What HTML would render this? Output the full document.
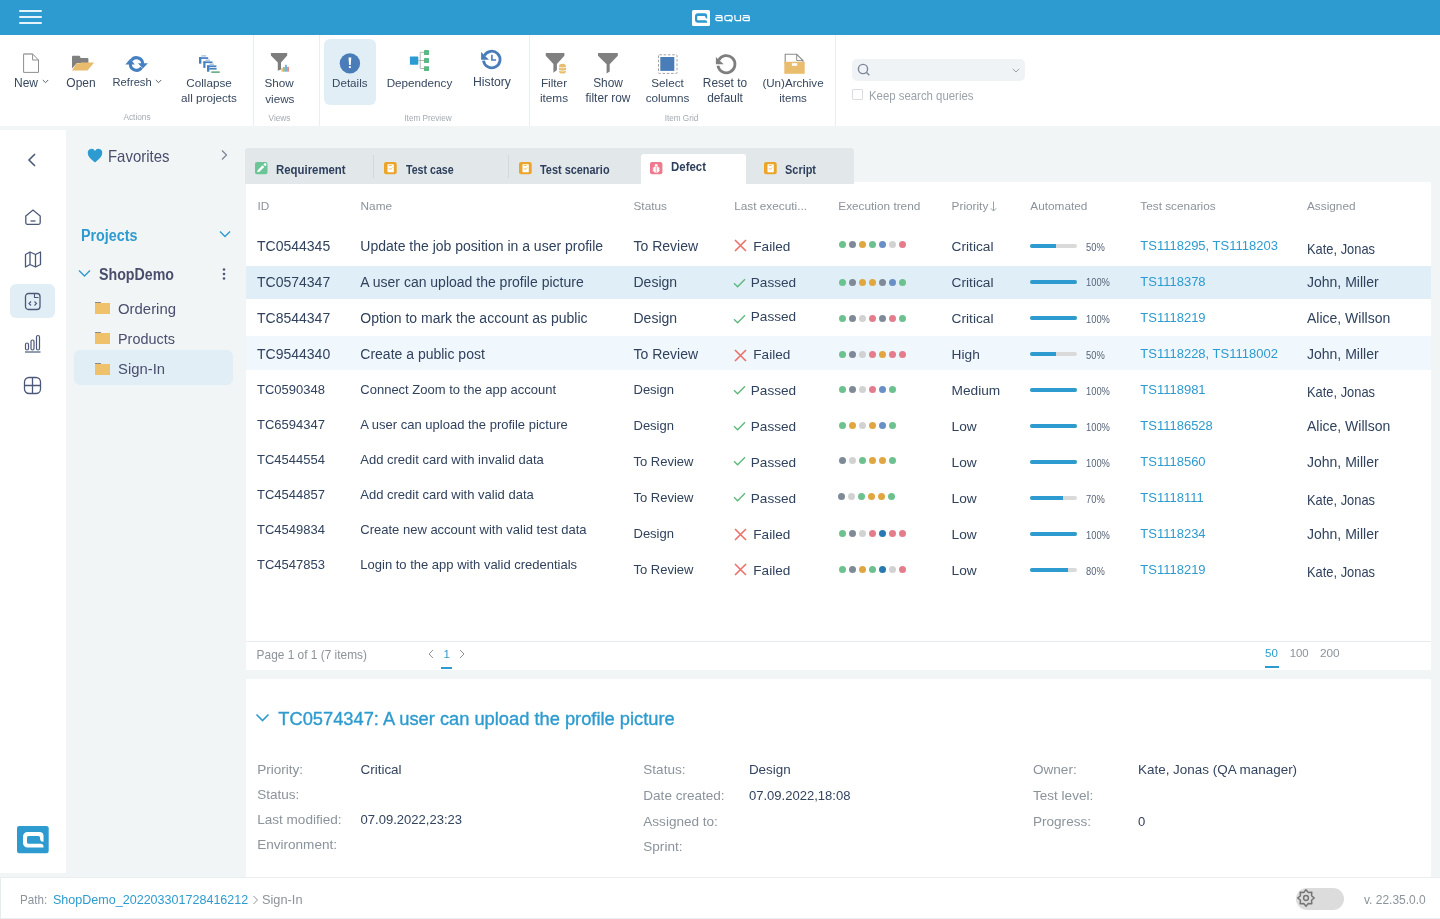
<!DOCTYPE html>
<html><head><meta charset="utf-8"><title>aqua</title>
<style>
html,body{margin:0;padding:0;}
body{width:1440px;height:919px;position:relative;overflow:hidden;font-family:"Liberation Sans", sans-serif;background:#f2f5f6;}
.t{position:absolute;white-space:nowrap;line-height:1;}
.r{position:absolute;display:block;}
#wrap{position:absolute;left:0;top:0;width:1440px;height:919px;will-change:transform;}
</style></head><body><div id="wrap">
<div class="r" style="left:0px;top:0px;width:1440px;height:919px;background:#f2f5f6;"></div>
<div class="r" style="left:0px;top:0px;width:1440px;height:35px;background:#2d9bd0;"></div>
<div class="r" style="left:0px;top:35px;width:1440px;height:91px;background:#ffffff;"></div>
<div class="r" style="left:253px;top:35px;width:1px;height:91px;background:#e9eef1;"></div>
<div class="r" style="left:319px;top:35px;width:1px;height:91px;background:#e9eef1;"></div>
<div class="r" style="left:529px;top:35px;width:1px;height:91px;background:#e9eef1;"></div>
<div class="r" style="left:835px;top:35px;width:1px;height:91px;background:#e9eef1;"></div>
<div class="r" style="left:0px;top:130px;width:66px;height:743px;background:#ffffff;"></div>
<div class="r" style="left:245px;top:148px;width:609px;height:36px;background:#e2e8ea;border-radius:3px 3px 0 0;"></div>
<div class="r" style="left:246px;top:184px;width:1185px;height:486px;background:#ffffff;"></div>
<div class="r" style="left:854px;top:182px;width:577px;height:2px;background:#ffffff;"></div>
<div class="r" style="left:246px;top:641px;width:1185px;height:1px;background:#e6ebee;"></div>
<div class="r" style="left:246px;top:679px;width:1185px;height:198px;background:#ffffff;"></div>
<div class="r" style="left:0px;top:877px;width:1440px;height:1px;background:#e9eef1;"></div>
<div class="r" style="left:0px;top:878px;width:1440px;height:40px;background:#ffffff;"></div>
<div class="r" style="left:0px;top:918px;width:1440px;height:1px;background:#e9eef1;"></div>
<div class="r" style="left:0px;top:878px;width:1px;height:40px;background:#e6ebee;"></div>
<div class="r" style="left:19px;top:10px;width:23px;height:2px;background:#e6f3fa;border-radius:1px;"></div>
<div class="r" style="left:19px;top:16px;width:23px;height:2px;background:#e6f3fa;border-radius:1px;"></div>
<div class="r" style="left:19px;top:22px;width:23px;height:2px;background:#e6f3fa;border-radius:1px;"></div>
<svg class="r" style="left:692px;top:10px" width="18" height="16" viewBox="0 0 18 16"><rect x="0" y="0" width="18" height="16" rx="1.5" fill="#fff"/><path d="M6 3.3H12.7A2.5 2.5 0 0 1 15.2 5.8V8.4A1.9 1.9 0 0 1 13.3 6.9A0.8 0.8 0 0 0 12.5 6.1H6A0.8 0.8 0 0 0 5.2 6.9V9.5A0.8 0.8 0 0 0 6 10.3H13.3A1.9 1.9 0 0 1 15.2 12.2V12.8H6A3 3 0 0 1 3 9.8V6.3A3 3 0 0 1 6 3.3Z" fill="#2d9bd0"/></svg>
<svg class="r" style="left:715px;top:0px" width="36" height="35" viewBox="0 0 36 35"><g fill="none" stroke="#fff" stroke-width="1.25"><path d="M0.6 15.7H5.6a1.4 1.4 0 0 1 1.4 1.4V20.5H2.1a1.4 1.4 0 0 1-1.4-1.4v-0.1a1.4 1.4 0 0 1 1.4-1.4H7"/><path d="M11.399999999999999 15.7H15.6a1.5 1.5 0 0 1 1.5 1.5V19a1.5 1.5 0 0 1-1.5 1.5H11.399999999999999a1.5 1.5 0 0 1-1.5-1.5V17.2a1.5 1.5 0 0 1 1.5-1.5z"/><path d="M14.399999999999999 19.2L16.7 21.6"/><path d="M19.9 15V19a1.5 1.5 0 0 0 1.5 1.5H25.5V15"/><path d="M27.8 15.7H32.8a1.4 1.4 0 0 1 1.4 1.4V20.5H29.3a1.4 1.4 0 0 1-1.4-1.4v-0.1a1.4 1.4 0 0 1 1.4-1.4H34.2"/></g></svg>
<svg class="r" style="left:22px;top:52px" width="18" height="22" viewBox="0 0 18 22"><path d="M1.6 1.9H10.6L16.5 8V20.4H1.6Z" fill="#fff" stroke="#8e8e8e" stroke-width="1"/><path d="M10.6 1.9V8H16.5" fill="none" stroke="#8e8e8e" stroke-width="1"/><path d="M1.6 2.2H10.3" stroke="#b5b5b5" stroke-width="1.2"/></svg>
<div class="t" style="left:14px;top:77px;font-size:12px;color:#37485f;">New</div>
<svg class="r" style="left:41.5px;top:79px" width="7" height="5" viewBox="0 0 7 5"><path d="M0.8 1l2.7 2.7L6.2 1" fill="none" stroke="#5a6478" stroke-width="1"/></svg>
<svg class="r" style="left:71px;top:55px" width="24" height="17" viewBox="0 0 24 17"><path d="M1 1.8a1 1 0 0 1 1-1h6.2a1 1 0 0 1 0.8 0.5L9.6 3H16.4a1 1 0 0 1 1 1V8H6L1 13.5Z" fill="#808080"/><path d="M1 15.6L5.6 8.2H9.2L10.2 7.6H23.2L16.5 15.6Z" fill="#e8bc6c"/></svg>
<div class="t" style="left:-219px;width:600px;text-align:center;top:77px;font-size:12px;color:#37485f;">Open</div>
<svg class="r" style="left:125px;top:55px" width="23" height="18" viewBox="0 0 23 18"><path d="M5.3 9A6.2 6.2 0 0 0 16.6 12.6" fill="none" stroke="#4580c0" stroke-width="3"/><path d="M6.4 5.4A6.2 6.2 0 0 1 17.7 9" fill="none" stroke="#4580c0" stroke-width="3"/><path d="M0.3 9.4L5.3 3.7 9.8 9.4z" fill="#4580c0"/><path d="M12.9 8.3L22.9 8.3 17.9 13.6z" fill="#4580c0"/></svg>
<div class="t" style="left:112.5px;top:77px;font-size:11.2px;color:#37485f;">Refresh</div>
<svg class="r" style="left:155px;top:78.5px" width="7" height="5" viewBox="0 0 7 5"><path d="M0.8 1l2.7 2.7L6.2 1" fill="none" stroke="#5a6478" stroke-width="1"/></svg>
<svg class="r" style="left:197px;top:54px" width="24" height="20" viewBox="0 0 24 20"><g fill="#4580c0"><rect x="2" y="3.2" width="9.2" height="1.7"/><rect x="2" y="3.2" width="2.4" height="6.5"/><rect x="6.3" y="7.4" width="9.2" height="1.7"/><rect x="6.3" y="7.4" width="2.2" height="6.5"/><rect x="10" y="11.4" width="9.4" height="1.8"/><rect x="10" y="11.4" width="2.4" height="6.3"/><rect x="12.4" y="14" width="7.2" height="1.6"/></g><g fill="#9bb8dc"><rect x="4.4" y="1.3" width="4.6" height="1.2"/><rect x="8.5" y="5.6" width="4.6" height="1.2"/><rect x="12.4" y="9.6" width="4.6" height="1.2"/></g><rect x="14.3" y="17.3" width="8.4" height="1.7" fill="#6ab08a"/></svg>
<div class="t" style="left:-91px;width:600px;text-align:center;top:77px;font-size:11.7px;color:#37485f;">Collapse</div>
<div class="t" style="left:-91px;width:600px;text-align:center;top:92px;font-size:11.7px;color:#37485f;">all projects</div>
<div class="t" style="left:-163px;width:600px;text-align:center;top:113px;font-size:8.3px;color:#a3abb3;">Actions</div>
<svg class="r" style="left:270px;top:52px" width="20" height="21" viewBox="0 0 20 21"><path d="M0.9 1H17.2V3.4L11 10.4V17.4L7.8 18.7V10.4L0.9 3.4Z" fill="#7d7d7d"/><rect x="11.3" y="15.9" width="1.7" height="3.8" fill="#f0c27e"/><rect x="13" y="14.9" width="2" height="4.8" fill="#8fc4a0"/><rect x="15" y="12.8" width="2" height="6.9" fill="#7fb0e0"/><rect x="17" y="14.9" width="2" height="4.8" fill="#f08c7c"/></svg>
<div class="t" style="left:-21px;width:600px;text-align:center;top:77px;font-size:11.7px;color:#37485f;">Show</div>
<div class="t" style="left:-20.19999999999999px;width:600px;text-align:center;top:93px;font-size:11.7px;color:#37485f;">views</div>
<div class="t" style="left:-20.5px;width:600px;text-align:center;top:114px;font-size:8.3px;color:#a3abb3;">Views</div>
<div class="r" style="left:324px;top:39px;width:52px;height:66px;background:#e1eef6;border-radius:6px;"></div>
<svg class="r" style="left:339px;top:52px" width="22" height="22" viewBox="0 0 22 22"><circle cx="10.9" cy="11.4" r="10.2" fill="#4a7db8"/><path d="M9.5 5.5H12.3L11.7 13.1H10.1Z" fill="#fff"/><rect x="9.9" y="14.2" width="2" height="1.8" fill="#fff"/></svg>
<div class="t" style="left:49.80000000000001px;width:600px;text-align:center;top:77px;font-size:11.6px;color:#37485f;">Details</div>
<svg class="r" style="left:409px;top:49px" width="22" height="23" viewBox="0 0 22 23"><path d="M9.3 11.5H15M11.2 3.3V19.5M11.2 3.3H15M11.2 19.5H15" stroke="#b4b4b4" stroke-width="1" fill="none"/><rect x="0.9" y="7.6" width="8.4" height="8.2" rx="0.8" fill="#2a9bd3"/><rect x="15" y="1.1" width="5" height="5" rx="0.4" fill="#5cb884"/><rect x="15" y="9.1" width="5" height="4.8" rx="0.4" fill="#5cb884"/><rect x="15" y="17.2" width="5" height="4.9" rx="0.4" fill="#5cb884"/></svg>
<div class="t" style="left:119.5px;width:600px;text-align:center;top:77px;font-size:11.7px;color:#37485f;">Dependency</div>
<svg class="r" style="left:480px;top:48px" width="23" height="23" viewBox="0 0 23 23"><path d="M3.5 12.6A8.3 8.3 0 1 0 4.4 7.6" fill="none" stroke="#4a7db8" stroke-width="2.8"/><path d="M1.1 3.9L5.4 8.2 9 11.8H1.1Z" fill="#4a7db8"/><path d="M11.9 6.8V12H16.1" fill="none" stroke="#4a7db8" stroke-width="1.6"/></svg>
<div class="t" style="left:192px;width:600px;text-align:center;top:76px;font-size:12.2px;color:#37485f;">History</div>
<div class="t" style="left:128px;width:600px;text-align:center;top:115px;font-size:8.2px;color:#a3abb3;">Item Preview</div>
<svg class="r" style="left:545px;top:52px" width="23" height="23" viewBox="0 0 23 23"><path d="M0.75 1.2Q0.75 1 1 1H19.2Q19.4 1 19.4 1.2V3.8L11.9 11.9V17.9L8.4 20.7V11.9L0.75 3.8Z" fill="#808080"/><rect x="14" y="11.8" width="7" height="9.8" rx="3.2" fill="#e8be6e"/><path d="M14 15.3Q17.5 16.6 21 15.3M14 18.4Q17.5 19.7 21 18.4" stroke="#fff" stroke-width="0.8" fill="none"/></svg>
<div class="t" style="left:254px;width:600px;text-align:center;top:78px;font-size:11.8px;color:#37485f;">Filter</div>
<div class="t" style="left:254px;width:600px;text-align:center;top:93px;font-size:11.8px;color:#37485f;">items</div>
<svg class="r" style="left:597px;top:52px" width="22" height="22" viewBox="0 0 22 22"><path d="M1 1.2Q1 1 1.2 1H20.6Q20.8 1 20.8 1.2V3.8L12.7 12.25V19.4L9.6 21.6V12.25L1 3.8Z" fill="#808080"/></svg>
<div class="t" style="left:308px;width:600px;text-align:center;top:78px;font-size:11.9px;color:#37485f;">Show</div>
<div class="t" style="left:308px;width:600px;text-align:center;top:93px;font-size:11.9px;color:#37485f;">filter row</div>
<svg class="r" style="left:657px;top:53px" width="21" height="21" viewBox="0 0 21 21"><rect x="1.5" y="1.8" width="18.5" height="18.6" rx="0.8" fill="none" stroke="#a3a3a3" stroke-width="1" stroke-dasharray="2.6 1.7"/><rect x="3.3" y="4" width="14" height="13.9" fill="#4a7db8"/></svg>
<div class="t" style="left:367.5px;width:600px;text-align:center;top:77px;font-size:11.7px;color:#37485f;">Select</div>
<div class="t" style="left:367.5px;width:600px;text-align:center;top:92px;font-size:11.7px;color:#37485f;">columns</div>
<svg class="r" style="left:714px;top:52.8px" width="24" height="23" viewBox="0 0 24 23"><path d="M3.9 12.8A8.6 8.6 0 1 0 4.7 7.3" fill="none" stroke="#7f7f7f" stroke-width="2.8"/><path d="M1.9 4L6 8.1 9.9 11.3H1.9Z" fill="#7f7f7f"/></svg>
<div class="t" style="left:425px;width:600px;text-align:center;top:78px;font-size:11.9px;color:#37485f;">Reset to</div>
<div class="t" style="left:425px;width:600px;text-align:center;top:93px;font-size:11.9px;color:#37485f;">default</div>
<svg class="r" style="left:783px;top:53px" width="23" height="22" viewBox="0 0 23 22"><path d="M2.2 1.3H13.7L20 7.6V10H2.2Z" fill="#fff" stroke="#8c8c8c" stroke-width="1.1"/><path d="M13.7 1.3V7.6H20" fill="none" stroke="#8c8c8c" stroke-width="1"/><rect x="1.3" y="8.75" width="20.4" height="12.05" fill="#e8be6e"/><rect x="8.9" y="10.2" width="5.3" height="2.6" fill="#fff"/></svg>
<div class="t" style="left:493px;width:600px;text-align:center;top:77px;font-size:11.6px;color:#37485f;">(Un)Archive</div>
<div class="t" style="left:493px;width:600px;text-align:center;top:92px;font-size:11.6px;color:#37485f;">items</div>
<div class="t" style="left:381.5px;width:600px;text-align:center;top:115px;font-size:8.2px;color:#a3abb3;">Item Grid</div>
<div class="r" style="left:852px;top:59px;width:173px;height:22px;background:#eff3f6;border-radius:5px;"></div>
<svg class="r" style="left:857px;top:63px" width="14" height="14" viewBox="0 0 14 14"><circle cx="6" cy="6" r="4.6" fill="none" stroke="#7d8799" stroke-width="1.4"/><path d="M9.3 9.3l3 3" stroke="#7d8799" stroke-width="1.4"/></svg>
<svg class="r" style="left:1012px;top:68px" width="8" height="5" viewBox="0 0 8 5"><path d="M0.8 0.8l3.2 3.2 3.2-3.2" fill="none" stroke="#9aa2ad" stroke-width="1"/></svg>
<div class="r" style="left:852px;top:89px;width:11px;height:11px;background:#ffffff;border:1px solid #d9dde1;box-sizing:border-box;border-radius:1px;"></div>
<div class="t" style="left:868.5px;top:89px;font-size:13px;color:#9aa3ab;transform:scaleX(0.876);transform-origin:left top;">Keep search queries</div>
<svg class="r" style="left:24px;top:150px" width="16" height="20" viewBox="0 0 16 20"><path d="M11 4L5 10l6 6" fill="none" stroke="#4b5878" stroke-width="1.6"/></svg>
<svg class="r" style="left:24px;top:208px" width="18" height="18" viewBox="0 0 18 18"><path d="M1.8 8L9 2l7.2 6v6.8a1.5 1.5 0 0 1-1.5 1.5H3.3a1.5 1.5 0 0 1-1.5-1.5z" fill="none" stroke="#4b5878" stroke-width="1.3"/><path d="M6.5 13h5" stroke="#4b5878" stroke-width="1.3"/></svg>
<svg class="r" style="left:24px;top:250px" width="18" height="19" viewBox="0 0 18 19"><path d="M1.5 4.5l4.5-2.5 5.5 2.5 5-2.5v12.5l-5 2.5-5.5-2.5-4.5 2.5z" fill="none" stroke="#4b5878" stroke-width="1.3" stroke-linejoin="round"/><path d="M6 2v12.5M11.5 4.5v12.5" stroke="#4b5878" stroke-width="1.3"/></svg>
<div class="r" style="left:10px;top:284px;width:45px;height:34px;background:#e1eef6;border-radius:6px;"></div>
<svg class="r" style="left:24px;top:292px" width="18" height="19" viewBox="0 0 18 19"><rect x="1.5" y="1.5" width="14.5" height="16" rx="3" fill="none" stroke="#4b5878" stroke-width="1.3"/><path d="M10.5 2v3.5h4" fill="none" stroke="#4b5878" stroke-width="1.1"/><path d="M7 9.5l-2 2 2 2M10.5 9.5l2 2-2 2" fill="none" stroke="#4b5878" stroke-width="1.1"/></svg>
<svg class="r" style="left:24px;top:334px" width="18" height="19" viewBox="0 0 18 19"><rect x="1.5" y="9" width="3" height="7" rx="1.5" fill="none" stroke="#4b5878" stroke-width="1.2"/><rect x="7" y="6" width="3" height="10" rx="1.5" fill="none" stroke="#4b5878" stroke-width="1.2"/><rect x="12.5" y="1.5" width="3" height="14.5" rx="1.5" fill="none" stroke="#4b5878" stroke-width="1.2"/><path d="M1 18h15.5" stroke="#4b5878" stroke-width="1.2"/></svg>
<svg class="r" style="left:23px;top:376px" width="19" height="19" viewBox="0 0 19 19"><rect x="1.5" y="1.5" width="16" height="16" rx="4.5" fill="none" stroke="#4b5878" stroke-width="1.3"/><path d="M9.5 1.5v16M1.5 9.5h16" stroke="#4b5878" stroke-width="1.3"/></svg>
<svg class="r" style="left:17px;top:826px" width="32" height="28" viewBox="0 0 32 28"><rect x="0" y="0" width="31.7" height="27.2" rx="2.2" fill="#2d9bd0"/><path d="M10.5 6H22.5A4 4 0 0 1 26.5 10V15.8A3.5 3.5 0 0 1 23 12.3V11.6A1.5 1.5 0 0 0 21.5 10.1H11.5A1.5 1.5 0 0 0 10 11.6V16.2A1.5 1.5 0 0 0 11.5 17.7H23.5A3 3 0 0 1 26.5 20.7V21.6H10.5A4.5 4.5 0 0 1 6 17.1V10.5A4.5 4.5 0 0 1 10.5 6Z" fill="#fff"/></svg>
<svg class="r" style="left:87px;top:147.6px" width="16" height="15" viewBox="0 0 16 15"><path d="M8 14.5C3 10.5 0.8 8 0.8 5A3.8 3.8 0 0 1 8 3a3.8 3.8 0 0 1 7.2 2c0 3-2.2 5.5-7.2 9.5z" fill="#2d9bd0"/></svg>
<div class="t" style="left:108.4px;top:148px;font-size:16.5px;color:#484e6c;transform:scaleX(0.905);transform-origin:left top;">Favorites</div>
<svg class="r" style="left:220px;top:149px" width="9" height="12" viewBox="0 0 9 12"><path d="M2 1.5l4.5 4.5L2 10.5" fill="none" stroke="#7b8494" stroke-width="1.2"/></svg>
<div class="t" style="left:80.6px;top:228px;font-size:16px;color:#2d9bcf;transform:scaleX(0.895);transform-origin:left top;font-weight:700;">Projects</div>
<svg class="r" style="left:219px;top:230px" width="12" height="8" viewBox="0 0 12 8"><path d="M1 1.5l5 5 5-5" fill="none" stroke="#2d9bd0" stroke-width="1.4"/></svg>
<svg class="r" style="left:78px;top:269px" width="13" height="9" viewBox="0 0 13 9"><path d="M1 1.5l5.5 5.5 5.5-5.5" fill="none" stroke="#2d9bd0" stroke-width="1.4"/></svg>
<div class="t" style="left:98.7px;top:267px;font-size:15.8px;color:#484e6c;transform:scaleX(0.9);transform-origin:left top;font-weight:700;">ShopDemo</div>
<svg class="r" style="left:222px;top:268px" width="4" height="12" viewBox="0 0 4 12"><circle cx="2" cy="1.5" r="1.3" fill="#4b5878"/><circle cx="2" cy="6" r="1.3" fill="#4b5878"/><circle cx="2" cy="10.5" r="1.3" fill="#4b5878"/></svg>
<div class="r" style="left:74px;top:350px;width:159px;height:35px;background:#e1eef6;border-radius:6px;"></div>
<svg class="r" style="left:95px;top:302px" width="15" height="12" viewBox="0 0 15 12"><rect x="0" y="0" width="6" height="2" fill="#8a8a8a"/><rect x="0" y="1" width="15" height="11" fill="#efc16a"/></svg>
<div class="t" style="left:117.7px;top:301px;font-size:15.5px;color:#484e6c;transform:scaleX(0.962);transform-origin:left top;">Ordering</div>
<svg class="r" style="left:95px;top:332.4px" width="15" height="12" viewBox="0 0 15 12"><rect x="0" y="0" width="6" height="2" fill="#8a8a8a"/><rect x="0" y="1" width="15" height="11" fill="#efc16a"/></svg>
<div class="t" style="left:117.7px;top:331px;font-size:15.5px;color:#484e6c;transform:scaleX(0.93);transform-origin:left top;">Products</div>
<svg class="r" style="left:95px;top:362.5px" width="15" height="12" viewBox="0 0 15 12"><rect x="0" y="0" width="6" height="2" fill="#8a8a8a"/><rect x="0" y="1" width="15" height="11" fill="#efc16a"/></svg>
<div class="t" style="left:117.7px;top:361px;font-size:15.5px;color:#484e6c;transform:scaleX(0.957);transform-origin:left top;">Sign-In</div>
<div class="r" style="left:641px;top:154px;width:105px;height:30px;background:#ffffff;border-radius:3px 3px 0 0;"></div>
<div class="r" style="left:373px;top:155px;width:1px;height:23px;background:#d3dadf;"></div>
<div class="r" style="left:508px;top:155px;width:1px;height:23px;background:#d3dadf;"></div>
<svg class="r" style="left:254.5px;top:161.8px" width="13" height="13" viewBox="0 0 13 13"><rect x="0" y="0" width="12.5" height="12.3" rx="2" fill="#6cc497"/><path d="M2.2 10.3L2.8 8 7.6 3.2 9.3 4.9 4.5 9.7z" fill="#fff"/><path d="M8.4 2.4l0.9-0.9a1.1 1.1 0 0 1 1.6 0l0.2 0.2a1.1 1.1 0 0 1 0 1.6l-0.9 0.9z" fill="#fff"/></svg>
<div class="t" style="left:276.4px;top:164px;font-size:12.5px;color:#2e3f5c;transform:scaleX(0.911);transform-origin:left top;font-weight:700;">Requirement</div>
<svg class="r" style="left:384.3px;top:161.8px" width="13" height="13" viewBox="0 0 13 13"><rect x="0" y="0" width="12.7" height="12.3" rx="2" fill="#eba52a"/><rect x="3.5" y="2.2" width="6.3" height="8" rx="0.5" fill="#fff"/><rect x="4.8" y="3.1" width="3" height="0.7" fill="#eba52a"/><path d="M5 6.3l1.2 1.2 2-2" fill="none" stroke="#eba52a" stroke-width="0.8"/></svg>
<div class="t" style="left:406.3px;top:164px;font-size:12.5px;color:#2e3f5c;transform:scaleX(0.851);transform-origin:left top;font-weight:700;">Test case</div>
<svg class="r" style="left:518.7px;top:161.8px" width="13" height="13" viewBox="0 0 13 13"><rect x="0" y="0" width="12.7" height="12.3" rx="2" fill="#eba52a"/><rect x="3.5" y="2.2" width="6.3" height="8" rx="0.5" fill="#fff"/><rect x="4.8" y="3.1" width="3" height="0.7" fill="#eba52a"/><path d="M5 6.3l1.2 1.2 2-2" fill="none" stroke="#eba52a" stroke-width="0.8"/></svg>
<div class="t" style="left:540px;top:164px;font-size:12.5px;color:#2e3f5c;transform:scaleX(0.873);transform-origin:left top;font-weight:700;">Test scenario</div>
<svg class="r" style="left:650.4px;top:161.8px" width="13" height="13" viewBox="0 0 13 13"><rect x="0" y="0" width="12.4" height="12.2" rx="2" fill="#ee7a8e"/><rect x="4.8" y="2.2" width="2.9" height="2" rx="0.6" fill="#fff"/><ellipse cx="6.25" cy="7.6" rx="3" ry="3.3" fill="#fff"/><path d="M6.25 4.6v6.2" stroke="#ee7a8e" stroke-width="0.7"/><path d="M2.6 6.2h1.2M8.7 6.2h1.2M2.6 8.6h1.2M8.7 8.6h1.2" stroke="#fff" stroke-width="0.7"/></svg>
<div class="t" style="left:670.5px;top:161px;font-size:12.5px;color:#2e3f5c;transform:scaleX(0.916);transform-origin:left top;font-weight:700;">Defect</div>
<svg class="r" style="left:763.7px;top:161.8px" width="13" height="13" viewBox="0 0 13 13"><rect x="0" y="0" width="12.7" height="12.3" rx="2" fill="#eba52a"/><rect x="3.5" y="2.2" width="6.3" height="8" rx="0.5" fill="#fff"/><rect x="4.8" y="3.1" width="3" height="0.7" fill="#eba52a"/><path d="M5 6.3l1.2 1.2 2-2" fill="none" stroke="#eba52a" stroke-width="0.8"/></svg>
<div class="t" style="left:785px;top:164px;font-size:12.5px;color:#2e3f5c;transform:scaleX(0.875);transform-origin:left top;font-weight:700;">Script</div>
<div class="t" style="left:257.5px;top:201px;font-size:11.8px;color:#8b939b;">ID</div>
<div class="t" style="left:360.6px;top:201px;font-size:11.8px;color:#8b939b;">Name</div>
<div class="t" style="left:633.5px;top:201px;font-size:11.8px;color:#8b939b;">Status</div>
<div class="t" style="left:734.2px;top:201px;font-size:11.8px;color:#8b939b;">Last executi...</div>
<div class="t" style="left:838.3px;top:201px;font-size:11.8px;color:#8b939b;">Execution trend</div>
<div class="t" style="left:951.6px;top:201px;font-size:11.8px;color:#8b939b;">Priority</div>
<div class="t" style="left:1030.3px;top:201px;font-size:11.8px;color:#8b939b;">Automated</div>
<div class="t" style="left:1140.3px;top:201px;font-size:11.8px;color:#8b939b;">Test scenarios</div>
<div class="t" style="left:1307px;top:201px;font-size:11.8px;color:#8b939b;">Assigned</div>
<svg class="r" style="left:990px;top:201px" width="7" height="11" viewBox="0 0 7 11"><path d="M3.5 0.5v9.5M0.8 7.3l2.7 2.7 2.7-2.7" fill="none" stroke="#9aa2aa" stroke-width="1"/></svg>
<div class="r" style="left:246px;top:266px;width:1185px;height:33px;background:#e0eef7;"></div>
<div class="r" style="left:246px;top:336px;width:1185px;height:34px;background:#f0f7fd;"></div>
<div class="t" style="left:257px;top:239px;font-size:14px;color:#30425d;">TC0544345</div>
<div class="t" style="left:360.3px;top:239px;font-size:14px;color:#30425d;">Update the job position in a user profile</div>
<div class="t" style="left:633.5px;top:239px;font-size:14px;color:#30425d;">To Review</div>
<svg class="r" style="left:733.8px;top:238.6px" width="13" height="13" viewBox="0 0 13 13"><path d="M1 1l11 11M12 1L1 12" fill="none" stroke="#ec6f6a" stroke-width="1.6"/></svg>
<div class="t" style="left:753.3px;top:240px;font-size:13.6px;color:#30425d;">Failed</div>
<svg class="r" style="left:839px;top:241.1px" width="7" height="7" viewBox="0 0 7 7"><circle cx="3.5" cy="3.5" r="3.5" fill="#6cc18f"/></svg>
<svg class="r" style="left:849px;top:241.1px" width="7" height="7" viewBox="0 0 7 7"><circle cx="3.5" cy="3.5" r="3.5" fill="#7f8a98"/></svg>
<svg class="r" style="left:859px;top:241.1px" width="7" height="7" viewBox="0 0 7 7"><circle cx="3.5" cy="3.5" r="3.5" fill="#e0a640"/></svg>
<svg class="r" style="left:869px;top:241.1px" width="7" height="7" viewBox="0 0 7 7"><circle cx="3.5" cy="3.5" r="3.5" fill="#6cc18f"/></svg>
<svg class="r" style="left:879px;top:241.1px" width="7" height="7" viewBox="0 0 7 7"><circle cx="3.5" cy="3.5" r="3.5" fill="#6a8fc4"/></svg>
<svg class="r" style="left:889px;top:241.1px" width="7" height="7" viewBox="0 0 7 7"><circle cx="3.5" cy="3.5" r="3.5" fill="#d2d2d2"/></svg>
<svg class="r" style="left:899px;top:241.1px" width="7" height="7" viewBox="0 0 7 7"><circle cx="3.5" cy="3.5" r="3.5" fill="#e57c8c"/></svg>
<div class="t" style="left:951.6px;top:240px;font-size:13.7px;color:#30425d;">Critical</div>
<div class="r" style="left:1030px;top:244.0px;width:47px;height:4px;background:#dadada;border-radius:2px;"></div>
<div class="r" style="left:1030px;top:244.0px;width:26px;height:4px;background:#2d9bcf;border-radius:2px 0 0 2px;"></div>
<div class="t" style="left:1086.3px;top:242px;font-size:11px;color:#56657a;transform:scaleX(0.85);transform-origin:left bottom;">50%</div>
<div class="t" style="left:1140.3px;top:239px;font-size:13px;color:#2d9bcf;">TS1118295, TS1118203</div>
<div class="t" style="left:1307px;top:242px;font-size:14.5px;color:#30425d;transform:scaleX(0.888);transform-origin:left top;">Kate, Jonas</div>
<div class="t" style="left:257px;top:275px;font-size:14px;color:#30425d;">TC0574347</div>
<div class="t" style="left:360.3px;top:275px;font-size:14px;color:#30425d;">A user can upload the profile picture</div>
<div class="t" style="left:633.5px;top:275px;font-size:14px;color:#30425d;">Design</div>
<svg class="r" style="left:732.5px;top:277.6px" width="13" height="10" viewBox="0 0 13 10"><path d="M1 5.2l3.6 3.6L12 1.2" fill="none" stroke="#5cb87a" stroke-width="1.3"/></svg>
<div class="t" style="left:750.8px;top:276px;font-size:13.6px;color:#30425d;">Passed</div>
<svg class="r" style="left:839px;top:278.6px" width="7" height="7" viewBox="0 0 7 7"><circle cx="3.5" cy="3.5" r="3.5" fill="#6cc18f"/></svg>
<svg class="r" style="left:849px;top:278.6px" width="7" height="7" viewBox="0 0 7 7"><circle cx="3.5" cy="3.5" r="3.5" fill="#7f8a98"/></svg>
<svg class="r" style="left:859px;top:278.6px" width="7" height="7" viewBox="0 0 7 7"><circle cx="3.5" cy="3.5" r="3.5" fill="#e0a640"/></svg>
<svg class="r" style="left:869px;top:278.6px" width="7" height="7" viewBox="0 0 7 7"><circle cx="3.5" cy="3.5" r="3.5" fill="#e0a640"/></svg>
<svg class="r" style="left:879px;top:278.6px" width="7" height="7" viewBox="0 0 7 7"><circle cx="3.5" cy="3.5" r="3.5" fill="#7f8a98"/></svg>
<svg class="r" style="left:889px;top:278.6px" width="7" height="7" viewBox="0 0 7 7"><circle cx="3.5" cy="3.5" r="3.5" fill="#6a8fc4"/></svg>
<svg class="r" style="left:899px;top:278.6px" width="7" height="7" viewBox="0 0 7 7"><circle cx="3.5" cy="3.5" r="3.5" fill="#6cc18f"/></svg>
<div class="t" style="left:951.6px;top:276px;font-size:13.7px;color:#30425d;">Critical</div>
<div class="r" style="left:1030px;top:280.0px;width:47px;height:4px;background:#dadada;border-radius:2px;"></div>
<div class="r" style="left:1030px;top:280.0px;width:47px;height:4px;background:#2d9bcf;border-radius:2px;"></div>
<div class="t" style="left:1086.3px;top:277px;font-size:11px;color:#56657a;transform:scaleX(0.85);transform-origin:left bottom;">100%</div>
<div class="t" style="left:1140.3px;top:275px;font-size:13px;color:#2d9bcf;">TS1118378</div>
<div class="t" style="left:1307px;top:275px;font-size:14px;color:#30425d;">John, Miller</div>
<div class="t" style="left:257px;top:311px;font-size:14px;color:#30425d;">TC8544347</div>
<div class="t" style="left:360.3px;top:311px;font-size:14px;color:#30425d;">Option to mark the account as public</div>
<div class="t" style="left:633.5px;top:311px;font-size:14px;color:#30425d;">Design</div>
<svg class="r" style="left:732.5px;top:313.8px" width="13" height="10" viewBox="0 0 13 10"><path d="M1 5.2l3.6 3.6L12 1.2" fill="none" stroke="#5cb87a" stroke-width="1.3"/></svg>
<div class="t" style="left:750.8px;top:310px;font-size:13.6px;color:#30425d;">Passed</div>
<svg class="r" style="left:839px;top:314.8px" width="7" height="7" viewBox="0 0 7 7"><circle cx="3.5" cy="3.5" r="3.5" fill="#6cc18f"/></svg>
<svg class="r" style="left:849px;top:314.8px" width="7" height="7" viewBox="0 0 7 7"><circle cx="3.5" cy="3.5" r="3.5" fill="#7f8a98"/></svg>
<svg class="r" style="left:859px;top:314.8px" width="7" height="7" viewBox="0 0 7 7"><circle cx="3.5" cy="3.5" r="3.5" fill="#d2d2d2"/></svg>
<svg class="r" style="left:869px;top:314.8px" width="7" height="7" viewBox="0 0 7 7"><circle cx="3.5" cy="3.5" r="3.5" fill="#e57c8c"/></svg>
<svg class="r" style="left:879px;top:314.8px" width="7" height="7" viewBox="0 0 7 7"><circle cx="3.5" cy="3.5" r="3.5" fill="#7f8a98"/></svg>
<svg class="r" style="left:889px;top:314.8px" width="7" height="7" viewBox="0 0 7 7"><circle cx="3.5" cy="3.5" r="3.5" fill="#e57c8c"/></svg>
<svg class="r" style="left:899px;top:314.8px" width="7" height="7" viewBox="0 0 7 7"><circle cx="3.5" cy="3.5" r="3.5" fill="#6cc18f"/></svg>
<div class="t" style="left:951.6px;top:312px;font-size:13.7px;color:#30425d;">Critical</div>
<div class="r" style="left:1030px;top:315.9px;width:47px;height:4px;background:#dadada;border-radius:2px;"></div>
<div class="r" style="left:1030px;top:315.9px;width:47px;height:4px;background:#2d9bcf;border-radius:2px;"></div>
<div class="t" style="left:1086.3px;top:314px;font-size:11px;color:#56657a;transform:scaleX(0.85);transform-origin:left bottom;">100%</div>
<div class="t" style="left:1140.3px;top:311px;font-size:13px;color:#2d9bcf;">TS1118219</div>
<div class="t" style="left:1307px;top:311px;font-size:14px;color:#30425d;">Alice, Willson</div>
<div class="t" style="left:257px;top:347px;font-size:14px;color:#30425d;">TC9544340</div>
<div class="t" style="left:360.3px;top:347px;font-size:14px;color:#30425d;">Create a public post</div>
<div class="t" style="left:633.5px;top:347px;font-size:14px;color:#30425d;">To Review</div>
<svg class="r" style="left:733.8px;top:348.6px" width="13" height="13" viewBox="0 0 13 13"><path d="M1 1l11 11M12 1L1 12" fill="none" stroke="#ec6f6a" stroke-width="1.6"/></svg>
<div class="t" style="left:753.3px;top:348px;font-size:13.6px;color:#30425d;">Failed</div>
<svg class="r" style="left:839px;top:351.1px" width="7" height="7" viewBox="0 0 7 7"><circle cx="3.5" cy="3.5" r="3.5" fill="#6cc18f"/></svg>
<svg class="r" style="left:849px;top:351.1px" width="7" height="7" viewBox="0 0 7 7"><circle cx="3.5" cy="3.5" r="3.5" fill="#7f8a98"/></svg>
<svg class="r" style="left:859px;top:351.1px" width="7" height="7" viewBox="0 0 7 7"><circle cx="3.5" cy="3.5" r="3.5" fill="#d2d2d2"/></svg>
<svg class="r" style="left:869px;top:351.1px" width="7" height="7" viewBox="0 0 7 7"><circle cx="3.5" cy="3.5" r="3.5" fill="#e57c8c"/></svg>
<svg class="r" style="left:879px;top:351.1px" width="7" height="7" viewBox="0 0 7 7"><circle cx="3.5" cy="3.5" r="3.5" fill="#e0a640"/></svg>
<svg class="r" style="left:889px;top:351.1px" width="7" height="7" viewBox="0 0 7 7"><circle cx="3.5" cy="3.5" r="3.5" fill="#e57c8c"/></svg>
<svg class="r" style="left:899px;top:351.1px" width="7" height="7" viewBox="0 0 7 7"><circle cx="3.5" cy="3.5" r="3.5" fill="#e57c8c"/></svg>
<div class="t" style="left:951.6px;top:348px;font-size:13.7px;color:#30425d;">High</div>
<div class="r" style="left:1030px;top:352.3px;width:47px;height:4px;background:#dadada;border-radius:2px;"></div>
<div class="r" style="left:1030px;top:352.3px;width:26px;height:4px;background:#2d9bcf;border-radius:2px 0 0 2px;"></div>
<div class="t" style="left:1086.3px;top:350px;font-size:11px;color:#56657a;transform:scaleX(0.85);transform-origin:left bottom;">50%</div>
<div class="t" style="left:1140.3px;top:347px;font-size:13px;color:#2d9bcf;">TS1118228, TS1118002</div>
<div class="t" style="left:1307px;top:347px;font-size:14px;color:#30425d;">John, Miller</div>
<div class="t" style="left:257px;top:383px;font-size:13px;color:#30425d;">TC0590348</div>
<div class="t" style="left:360.3px;top:383px;font-size:13px;color:#30425d;">Connect Zoom to the app account</div>
<div class="t" style="left:633.5px;top:383px;font-size:13px;color:#30425d;">Design</div>
<svg class="r" style="left:732.5px;top:384.7px" width="13" height="10" viewBox="0 0 13 10"><path d="M1 5.2l3.6 3.6L12 1.2" fill="none" stroke="#5cb87a" stroke-width="1.3"/></svg>
<div class="t" style="left:750.8px;top:384px;font-size:13.6px;color:#30425d;">Passed</div>
<svg class="r" style="left:839px;top:385.7px" width="7" height="7" viewBox="0 0 7 7"><circle cx="3.5" cy="3.5" r="3.5" fill="#6cc18f"/></svg>
<svg class="r" style="left:849px;top:385.7px" width="7" height="7" viewBox="0 0 7 7"><circle cx="3.5" cy="3.5" r="3.5" fill="#7f8a98"/></svg>
<svg class="r" style="left:859px;top:385.7px" width="7" height="7" viewBox="0 0 7 7"><circle cx="3.5" cy="3.5" r="3.5" fill="#d2d2d2"/></svg>
<svg class="r" style="left:869px;top:385.7px" width="7" height="7" viewBox="0 0 7 7"><circle cx="3.5" cy="3.5" r="3.5" fill="#e57c8c"/></svg>
<svg class="r" style="left:879px;top:385.7px" width="7" height="7" viewBox="0 0 7 7"><circle cx="3.5" cy="3.5" r="3.5" fill="#6a8fc4"/></svg>
<svg class="r" style="left:889px;top:385.7px" width="7" height="7" viewBox="0 0 7 7"><circle cx="3.5" cy="3.5" r="3.5" fill="#6cc18f"/></svg>
<div class="t" style="left:951.6px;top:384px;font-size:13.7px;color:#30425d;">Medium</div>
<div class="r" style="left:1030px;top:387.9px;width:47px;height:4px;background:#dadada;border-radius:2px;"></div>
<div class="r" style="left:1030px;top:387.9px;width:47px;height:4px;background:#2d9bcf;border-radius:2px;"></div>
<div class="t" style="left:1086.3px;top:386px;font-size:11px;color:#56657a;transform:scaleX(0.85);transform-origin:left bottom;">100%</div>
<div class="t" style="left:1140.3px;top:383px;font-size:13px;color:#2d9bcf;">TS1118981</div>
<div class="t" style="left:1307px;top:385px;font-size:14.5px;color:#30425d;transform:scaleX(0.888);transform-origin:left top;">Kate, Jonas</div>
<div class="t" style="left:257px;top:418px;font-size:13px;color:#30425d;">TC6594347</div>
<div class="t" style="left:360.3px;top:418px;font-size:13px;color:#30425d;">A user can upload the profile picture</div>
<div class="t" style="left:633.5px;top:419px;font-size:13px;color:#30425d;">Design</div>
<svg class="r" style="left:732.5px;top:421.0px" width="13" height="10" viewBox="0 0 13 10"><path d="M1 5.2l3.6 3.6L12 1.2" fill="none" stroke="#5cb87a" stroke-width="1.3"/></svg>
<div class="t" style="left:750.8px;top:420px;font-size:13.6px;color:#30425d;">Passed</div>
<svg class="r" style="left:839px;top:422.0px" width="7" height="7" viewBox="0 0 7 7"><circle cx="3.5" cy="3.5" r="3.5" fill="#6cc18f"/></svg>
<svg class="r" style="left:849px;top:422.0px" width="7" height="7" viewBox="0 0 7 7"><circle cx="3.5" cy="3.5" r="3.5" fill="#e0a640"/></svg>
<svg class="r" style="left:859px;top:422.0px" width="7" height="7" viewBox="0 0 7 7"><circle cx="3.5" cy="3.5" r="3.5" fill="#d2d2d2"/></svg>
<svg class="r" style="left:869px;top:422.0px" width="7" height="7" viewBox="0 0 7 7"><circle cx="3.5" cy="3.5" r="3.5" fill="#e0a640"/></svg>
<svg class="r" style="left:879px;top:422.0px" width="7" height="7" viewBox="0 0 7 7"><circle cx="3.5" cy="3.5" r="3.5" fill="#6a8fc4"/></svg>
<svg class="r" style="left:889px;top:422.0px" width="7" height="7" viewBox="0 0 7 7"><circle cx="3.5" cy="3.5" r="3.5" fill="#6cc18f"/></svg>
<div class="t" style="left:951.6px;top:420px;font-size:13.7px;color:#30425d;">Low</div>
<div class="r" style="left:1030px;top:423.7px;width:47px;height:4px;background:#dadada;border-radius:2px;"></div>
<div class="r" style="left:1030px;top:423.7px;width:47px;height:4px;background:#2d9bcf;border-radius:2px;"></div>
<div class="t" style="left:1086.3px;top:422px;font-size:11px;color:#56657a;transform:scaleX(0.85);transform-origin:left bottom;">100%</div>
<div class="t" style="left:1140.3px;top:419px;font-size:13px;color:#2d9bcf;">TS11186528</div>
<div class="t" style="left:1307px;top:419px;font-size:14px;color:#30425d;">Alice, Willson</div>
<div class="t" style="left:257px;top:453px;font-size:13px;color:#30425d;">TC4544554</div>
<div class="t" style="left:360.3px;top:453px;font-size:13px;color:#30425d;">Add credit card with invalid data</div>
<div class="t" style="left:633.5px;top:455px;font-size:13px;color:#30425d;">To Review</div>
<svg class="r" style="left:732.5px;top:456.0px" width="13" height="10" viewBox="0 0 13 10"><path d="M1 5.2l3.6 3.6L12 1.2" fill="none" stroke="#5cb87a" stroke-width="1.3"/></svg>
<div class="t" style="left:750.8px;top:456px;font-size:13.6px;color:#30425d;">Passed</div>
<svg class="r" style="left:839px;top:457.0px" width="7" height="7" viewBox="0 0 7 7"><circle cx="3.5" cy="3.5" r="3.5" fill="#7f8a98"/></svg>
<svg class="r" style="left:849px;top:457.0px" width="7" height="7" viewBox="0 0 7 7"><circle cx="3.5" cy="3.5" r="3.5" fill="#d2d2d2"/></svg>
<svg class="r" style="left:859px;top:457.0px" width="7" height="7" viewBox="0 0 7 7"><circle cx="3.5" cy="3.5" r="3.5" fill="#6cc18f"/></svg>
<svg class="r" style="left:869px;top:457.0px" width="7" height="7" viewBox="0 0 7 7"><circle cx="3.5" cy="3.5" r="3.5" fill="#e0a640"/></svg>
<svg class="r" style="left:879px;top:457.0px" width="7" height="7" viewBox="0 0 7 7"><circle cx="3.5" cy="3.5" r="3.5" fill="#e0a640"/></svg>
<svg class="r" style="left:889px;top:457.0px" width="7" height="7" viewBox="0 0 7 7"><circle cx="3.5" cy="3.5" r="3.5" fill="#6cc18f"/></svg>
<div class="t" style="left:951.6px;top:456px;font-size:13.7px;color:#30425d;">Low</div>
<div class="r" style="left:1030px;top:459.9px;width:47px;height:4px;background:#dadada;border-radius:2px;"></div>
<div class="r" style="left:1030px;top:459.9px;width:47px;height:4px;background:#2d9bcf;border-radius:2px;"></div>
<div class="t" style="left:1086.3px;top:458px;font-size:11px;color:#56657a;transform:scaleX(0.85);transform-origin:left bottom;">100%</div>
<div class="t" style="left:1140.3px;top:455px;font-size:13px;color:#2d9bcf;">TS1118560</div>
<div class="t" style="left:1307px;top:455px;font-size:14px;color:#30425d;">John, Miller</div>
<div class="t" style="left:257px;top:488px;font-size:13px;color:#30425d;">TC4544857</div>
<div class="t" style="left:360.3px;top:488px;font-size:13px;color:#30425d;">Add credit card with valid data</div>
<div class="t" style="left:633.5px;top:491px;font-size:13px;color:#30425d;">To Review</div>
<svg class="r" style="left:732.5px;top:491.7px" width="13" height="10" viewBox="0 0 13 10"><path d="M1 5.2l3.6 3.6L12 1.2" fill="none" stroke="#5cb87a" stroke-width="1.3"/></svg>
<div class="t" style="left:750.8px;top:492px;font-size:13.6px;color:#30425d;">Passed</div>
<svg class="r" style="left:838px;top:492.7px" width="7" height="7" viewBox="0 0 7 7"><circle cx="3.5" cy="3.5" r="3.5" fill="#7f8a98"/></svg>
<svg class="r" style="left:848px;top:492.7px" width="7" height="7" viewBox="0 0 7 7"><circle cx="3.5" cy="3.5" r="3.5" fill="#d2d2d2"/></svg>
<svg class="r" style="left:858px;top:492.7px" width="7" height="7" viewBox="0 0 7 7"><circle cx="3.5" cy="3.5" r="3.5" fill="#6cc18f"/></svg>
<svg class="r" style="left:868px;top:492.7px" width="7" height="7" viewBox="0 0 7 7"><circle cx="3.5" cy="3.5" r="3.5" fill="#e0a640"/></svg>
<svg class="r" style="left:878px;top:492.7px" width="7" height="7" viewBox="0 0 7 7"><circle cx="3.5" cy="3.5" r="3.5" fill="#e0a640"/></svg>
<svg class="r" style="left:888px;top:492.7px" width="7" height="7" viewBox="0 0 7 7"><circle cx="3.5" cy="3.5" r="3.5" fill="#6cc18f"/></svg>
<div class="t" style="left:951.6px;top:492px;font-size:13.7px;color:#30425d;">Low</div>
<div class="r" style="left:1030px;top:496.0px;width:47px;height:4px;background:#dadada;border-radius:2px;"></div>
<div class="r" style="left:1030px;top:496.0px;width:33px;height:4px;background:#2d9bcf;border-radius:2px 0 0 2px;"></div>
<div class="t" style="left:1086.3px;top:494px;font-size:11px;color:#56657a;transform:scaleX(0.85);transform-origin:left bottom;">70%</div>
<div class="t" style="left:1140.3px;top:491px;font-size:13px;color:#2d9bcf;">TS1118111</div>
<div class="t" style="left:1307px;top:493px;font-size:14.5px;color:#30425d;transform:scaleX(0.888);transform-origin:left top;">Kate, Jonas</div>
<div class="t" style="left:257px;top:523px;font-size:13px;color:#30425d;">TC4549834</div>
<div class="t" style="left:360.3px;top:523px;font-size:13px;color:#30425d;">Create new account with valid test data</div>
<div class="t" style="left:633.5px;top:527px;font-size:13px;color:#30425d;">Design</div>
<svg class="r" style="left:733.8px;top:527.5px" width="13" height="13" viewBox="0 0 13 13"><path d="M1 1l11 11M12 1L1 12" fill="none" stroke="#ec6f6a" stroke-width="1.6"/></svg>
<div class="t" style="left:753.3px;top:528px;font-size:13.6px;color:#30425d;">Failed</div>
<svg class="r" style="left:839px;top:530.0px" width="7" height="7" viewBox="0 0 7 7"><circle cx="3.5" cy="3.5" r="3.5" fill="#6cc18f"/></svg>
<svg class="r" style="left:849px;top:530.0px" width="7" height="7" viewBox="0 0 7 7"><circle cx="3.5" cy="3.5" r="3.5" fill="#7f8a98"/></svg>
<svg class="r" style="left:859px;top:530.0px" width="7" height="7" viewBox="0 0 7 7"><circle cx="3.5" cy="3.5" r="3.5" fill="#d2d2d2"/></svg>
<svg class="r" style="left:869px;top:530.0px" width="7" height="7" viewBox="0 0 7 7"><circle cx="3.5" cy="3.5" r="3.5" fill="#e57c8c"/></svg>
<svg class="r" style="left:879px;top:530.0px" width="7" height="7" viewBox="0 0 7 7"><circle cx="3.5" cy="3.5" r="3.5" fill="#2a78b0"/></svg>
<svg class="r" style="left:889px;top:530.0px" width="7" height="7" viewBox="0 0 7 7"><circle cx="3.5" cy="3.5" r="3.5" fill="#e57c8c"/></svg>
<svg class="r" style="left:899px;top:530.0px" width="7" height="7" viewBox="0 0 7 7"><circle cx="3.5" cy="3.5" r="3.5" fill="#e57c8c"/></svg>
<div class="t" style="left:951.6px;top:528px;font-size:13.7px;color:#30425d;">Low</div>
<div class="r" style="left:1030px;top:531.9px;width:47px;height:4px;background:#dadada;border-radius:2px;"></div>
<div class="r" style="left:1030px;top:531.9px;width:47px;height:4px;background:#2d9bcf;border-radius:2px;"></div>
<div class="t" style="left:1086.3px;top:530px;font-size:11px;color:#56657a;transform:scaleX(0.85);transform-origin:left bottom;">100%</div>
<div class="t" style="left:1140.3px;top:527px;font-size:13px;color:#2d9bcf;">TS1118234</div>
<div class="t" style="left:1307px;top:527px;font-size:14px;color:#30425d;">John, Miller</div>
<div class="t" style="left:257px;top:558px;font-size:13px;color:#30425d;">TC4547853</div>
<div class="t" style="left:360.3px;top:558px;font-size:13px;color:#30425d;">Login to the app with valid credentials</div>
<div class="t" style="left:633.5px;top:563px;font-size:13px;color:#30425d;">To Review</div>
<svg class="r" style="left:733.8px;top:563.2px" width="13" height="13" viewBox="0 0 13 13"><path d="M1 1l11 11M12 1L1 12" fill="none" stroke="#ec6f6a" stroke-width="1.6"/></svg>
<div class="t" style="left:753.3px;top:564px;font-size:13.6px;color:#30425d;">Failed</div>
<svg class="r" style="left:839px;top:565.7px" width="7" height="7" viewBox="0 0 7 7"><circle cx="3.5" cy="3.5" r="3.5" fill="#6cc18f"/></svg>
<svg class="r" style="left:849px;top:565.7px" width="7" height="7" viewBox="0 0 7 7"><circle cx="3.5" cy="3.5" r="3.5" fill="#7f8a98"/></svg>
<svg class="r" style="left:859px;top:565.7px" width="7" height="7" viewBox="0 0 7 7"><circle cx="3.5" cy="3.5" r="3.5" fill="#e0a640"/></svg>
<svg class="r" style="left:869px;top:565.7px" width="7" height="7" viewBox="0 0 7 7"><circle cx="3.5" cy="3.5" r="3.5" fill="#6cc18f"/></svg>
<svg class="r" style="left:879px;top:565.7px" width="7" height="7" viewBox="0 0 7 7"><circle cx="3.5" cy="3.5" r="3.5" fill="#2a78b0"/></svg>
<svg class="r" style="left:889px;top:565.7px" width="7" height="7" viewBox="0 0 7 7"><circle cx="3.5" cy="3.5" r="3.5" fill="#d2d2d2"/></svg>
<svg class="r" style="left:899px;top:565.7px" width="7" height="7" viewBox="0 0 7 7"><circle cx="3.5" cy="3.5" r="3.5" fill="#e57c8c"/></svg>
<div class="t" style="left:951.6px;top:564px;font-size:13.7px;color:#30425d;">Low</div>
<div class="r" style="left:1030px;top:568.0px;width:47px;height:4px;background:#dadada;border-radius:2px;"></div>
<div class="r" style="left:1030px;top:568.0px;width:38px;height:4px;background:#2d9bcf;border-radius:2px 0 0 2px;"></div>
<div class="t" style="left:1086.3px;top:566px;font-size:11px;color:#56657a;transform:scaleX(0.85);transform-origin:left bottom;">80%</div>
<div class="t" style="left:1140.3px;top:563px;font-size:13px;color:#2d9bcf;">TS1118219</div>
<div class="t" style="left:1307px;top:565px;font-size:14.5px;color:#30425d;transform:scaleX(0.888);transform-origin:left top;">Kate, Jonas</div>
<div class="t" style="left:256.6px;top:650px;font-size:11.9px;color:#8b939b;">Page 1 of 1 (7 items)</div>
<svg class="r" style="left:427px;top:649px" width="8" height="10" viewBox="0 0 8 10"><path d="M6 1L2 5l4 4" fill="none" stroke="#8b939b" stroke-width="1"/></svg>
<div class="t" style="left:443.6px;top:649px;font-size:11.5px;color:#2d9bcf;">1</div>
<div class="r" style="left:441px;top:666.5px;width:11px;height:2px;background:#2d9bcf;"></div>
<svg class="r" style="left:458px;top:649px" width="8" height="10" viewBox="0 0 8 10"><path d="M2 1l4 4-4 4" fill="none" stroke="#8b939b" stroke-width="1"/></svg>
<div class="t" style="left:1265px;top:648px;font-size:11.5px;color:#2d9bcf;">50</div>
<div class="r" style="left:1265px;top:665.5px;width:14px;height:2px;background:#2d9bcf;"></div>
<div class="t" style="left:1289.7px;top:648px;font-size:11.4px;color:#8b939b;">100</div>
<div class="t" style="left:1320px;top:648px;font-size:11.8px;color:#8b939b;">200</div>
<svg class="r" style="left:255px;top:713px" width="15" height="10" viewBox="0 0 15 10"><path d="M1.5 1.5l6 6 6-6" fill="none" stroke="#2d9bd0" stroke-width="1.6"/></svg>
<div class="t" style="left:278.3px;top:710px;font-size:18.3px;color:#2d9bcf;-webkit-text-stroke:0.35px #2d9bcf;">TC0574347: A user can upload the profile picture</div>
<div class="t" style="left:257.2px;top:763px;font-size:13.55px;color:#8b939b;">Priority:</div>
<div class="t" style="left:257.2px;top:788px;font-size:13.55px;color:#8b939b;">Status:</div>
<div class="t" style="left:257.2px;top:813px;font-size:13.55px;color:#8b939b;">Last modified:</div>
<div class="t" style="left:257.2px;top:838px;font-size:13.55px;color:#8b939b;">Environment:</div>
<div class="t" style="left:643.3px;top:763px;font-size:13.55px;color:#8b939b;">Status:</div>
<div class="t" style="left:643.3px;top:789px;font-size:13.55px;color:#8b939b;">Date created:</div>
<div class="t" style="left:643.3px;top:815px;font-size:13.55px;color:#8b939b;">Assigned to:</div>
<div class="t" style="left:643.3px;top:840px;font-size:13.55px;color:#8b939b;">Sprint:</div>
<div class="t" style="left:1033px;top:763px;font-size:13.55px;color:#8b939b;">Owner:</div>
<div class="t" style="left:1033px;top:789px;font-size:13.55px;color:#8b939b;">Test level:</div>
<div class="t" style="left:1033px;top:815px;font-size:13.55px;color:#8b939b;">Progress:</div>
<div class="t" style="left:360.5px;top:763px;font-size:13.45px;color:#33445e;">Critical</div>
<div class="t" style="left:360.5px;top:813px;font-size:13.05px;color:#33445e;">07.09.2022,23:23</div>
<div class="t" style="left:748.9px;top:763px;font-size:13.45px;color:#33445e;">Design</div>
<div class="t" style="left:748.9px;top:789px;font-size:13.05px;color:#33445e;">07.09.2022,18:08</div>
<div class="t" style="left:1138px;top:763px;font-size:13.45px;color:#33445e;">Kate, Jonas (QA manager)</div>
<div class="t" style="left:1138px;top:815px;font-size:13.05px;color:#33445e;">0</div>
<div class="t" style="left:19.5px;top:893px;font-size:13.5px;color:#8b939b;transform:scaleX(0.863);transform-origin:left top;">Path:</div>
<div class="t" style="left:52.9px;top:893px;font-size:13.5px;color:#2d9bcf;transform:scaleX(0.929);transform-origin:left top;">ShopDemo_202203301728416212</div>
<svg class="r" style="left:251.5px;top:895px" width="7" height="10" viewBox="0 0 7 10"><path d="M1.5 1l4 4-4 4" fill="none" stroke="#8b939b" stroke-width="1"/></svg>
<div class="t" style="left:262.2px;top:893px;font-size:13.5px;color:#8b939b;transform:scaleX(0.947);transform-origin:left top;">Sign-In</div>
<div class="r" style="left:1296px;top:888px;width:48px;height:22px;background:#dcdcdc;border-radius:11px;"></div>
<svg class="r" style="left:1297.4px;top:889px" width="18" height="18" viewBox="0 0 18 18"><path d="M9.00 0.80 L11.30 3.46 L14.80 3.20 L14.54 6.70 L17.20 9.00 L14.54 11.30 L14.80 14.80 L11.30 14.54 L9.00 17.20 L6.70 14.54 L3.20 14.80 L3.46 11.30 L0.80 9.00 L3.46 6.70 L3.20 3.20 L6.70 3.46Z" fill="none" stroke="#747474" stroke-width="1.5" stroke-linejoin="round"/><circle cx="9" cy="9" r="2.4" fill="none" stroke="#747474" stroke-width="1.5"/></svg>
<div class="t" style="left:1363.6px;top:893px;font-size:13.4px;color:#8b949c;transform:scaleX(0.895);transform-origin:left top;">v. 22.35.0.0</div>
</div></body></html>
